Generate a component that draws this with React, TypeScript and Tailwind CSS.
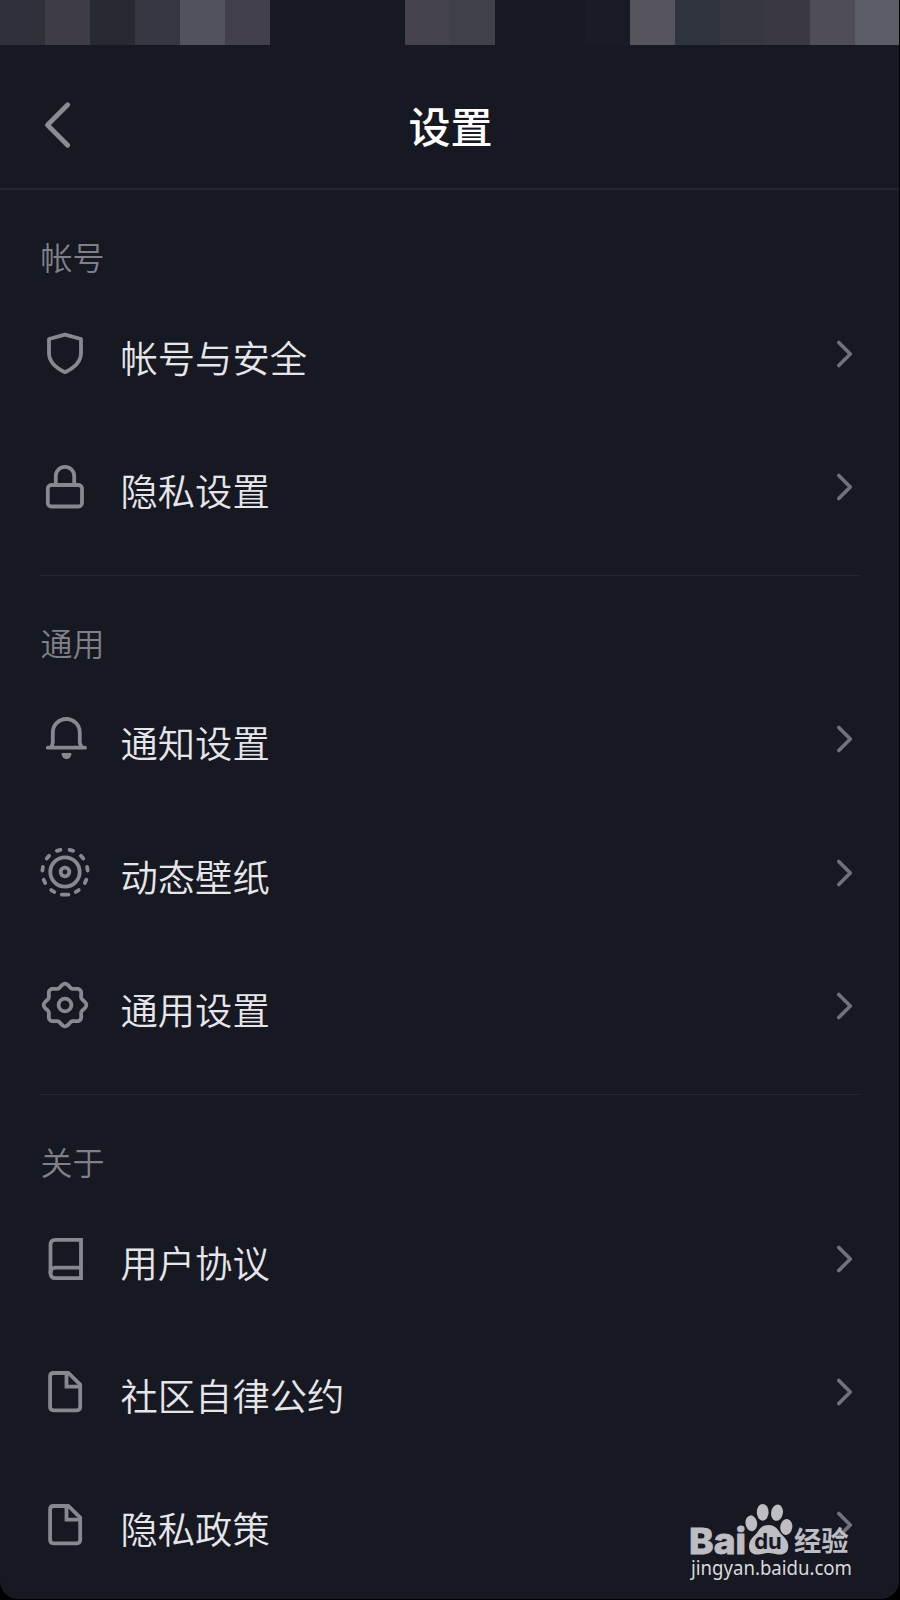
import type { ReactNode } from "react";

const statusBlocks = [
  "bg-[#2e3139]",
  "bg-[#3e3c45]",
  "bg-[#272a31]",
  "bg-[#34373f]",
  "bg-[#50535b]",
  "bg-[#413f49]",
  "bg-[#161822]",
  "bg-[#161822]",
  "bg-[#161822]",
  "bg-[#45444d]",
  "bg-[#3f4149]",
  "bg-[#161822]",
  "bg-[#161822]",
  "bg-[#191b26]",
  "bg-[#55545c]",
  "bg-[#30353d]",
  "bg-[#363840]",
  "bg-[#3a3841]",
  "bg-[#4f4e57]",
  "bg-[#5b5e66]",
];

function gearPath() {
  const points: string[] = [];
  for (let deg = 0; deg < 360; deg += 3) {
    const a = (deg * Math.PI) / 180;
    const r = 19.5 + 1.8 * Math.cos(8 * a);
    points.push(`${(25 + r * Math.cos(a)).toFixed(2)} ${(24 + r * Math.sin(a)).toFixed(2)}`);
  }
  return `M${points.join("L")}Z`;
}

const icons: Record<string, ReactNode> = {
  shield: <path d="M25 5.6L41 10V24C41 32.5 35 38.5 25 43.2C15 38.5 9 32.5 9 24V10Z" />,
  lock: (
    <>
      <rect x="7.8" y="23" width="34.2" height="21.5" rx="3.5" />
      <path d="M15.8 23V14a9.2 9.2 0 0 1 18.4 0V23" />
    </>
  ),
  bell: (
    <>
      <path d="M7.8 33.7H45M11.5 33.2L12.8 28.5V18.5a13.5 13.5 0 0 1 27 0V28.5L41.3 33.2" />
      <path
        d="M22.5 39H30.5Q31.8 39 31.4 40.5Q30.2 45 26.5 45Q22.8 45 21.6 40.5Q21.2 39 22.5 39Z"
        fill="currentColor"
        stroke="none"
      />
    </>
  ),
  wallpaper: (
    <>
      <circle cx="25" cy="24" r="14.7" />
      <circle cx="25" cy="24" r="4.3" />
      {Array.from({ length: 11 }, (_, i) => (
        <path
          key={i}
          d={i === 0 ? "M21.8 46.6H28.4" : "M23.2 46.6H26.8"}
          transform={`rotate(${(i * 360) / 11} 25 24)`}
        />
      ))}
    </>
  ),
  gear: (
    <>
      <path d={gearPath()} />
      <circle cx="25" cy="24" r="6.4" />
    </>
  ),
  book: (
    <>
      <path d="M41 5.8H15.5Q10.5 5.8 10.5 10.8V39Q10.5 44.2 15.5 44.2H41Z" strokeLinejoin="miter" />
      <path d="M41 33.7H15.5Q10.5 33.7 10.5 39" />
    </>
  ),
  file: (
    <>
      <path d="M14 6H28.5L40.2 17.6V39.8Q40.2 43.3 36.7 43.3H13.6Q10.1 43.3 10.1 39.8V9.5Q10.1 6 13.6 6Z" />
      <path d="M26.5 6.5V19.7H40" strokeLinejoin="miter" />
    </>
  ),
};

const sections = [
  {
    title: "帐号",
    items: [
      { icon: "shield", label: "帐号与安全" },
      { icon: "lock", label: "隐私设置" },
    ],
  },
  {
    title: "通用",
    items: [
      { icon: "bell", label: "通知设置" },
      { icon: "wallpaper", label: "动态壁纸" },
      { icon: "gear", label: "通用设置" },
    ],
  },
  {
    title: "关于",
    items: [
      { icon: "book", label: "用户协议" },
      { icon: "file", label: "社区自律公约" },
      { icon: "file", label: "隐私政策" },
    ],
  },
];

function SettingRow({ icon, label }: { icon: string; label: string }) {
  return (
    <div className="flex h-[133.3px] items-center pt-px">
      <svg
        viewBox="0 0 50 50"
        className="size-[50px] shrink-0 text-[#888990]"
        fill="none"
        stroke="currentColor"
        strokeWidth="3.8"
        strokeLinecap="round"
        strokeLinejoin="round"
      >
        {icons[icon]}
      </svg>
      <span className="ml-[30.5px] flex-1 pt-[6px] text-[37.3px] leading-[50px] font-[350] text-[#e6e6e9]">
        {label}
      </span>
      <svg
        viewBox="0 0 20 32"
        className="mr-1 h-8 w-5 shrink-0"
        fill="none"
        stroke="#70717a"
        strokeWidth="3.7"
        strokeLinecap="round"
        strokeLinejoin="round"
      >
        <path d="M3.8 4.5L15.3 16L3.8 27.5" />
      </svg>
    </div>
  );
}

function Watermark() {
  return (
    <svg
      viewBox="0 0 170 84"
      className="absolute right-[45px] bottom-[16px] h-[84px] w-[170px]"
      fill="#bdbdc2"
    >
      <text
        x="5"
        y="54.5"
        fontSize="36"
        fontWeight="800"
        textLength="57"
        lengthAdjust="spacingAndGlyphs"
        fontFamily="Inter, sans-serif"
        stroke="#bdbdc2"
        strokeWidth="0.8"
      >
        Bai
      </text>
      <ellipse cx="67.3" cy="24.3" rx="5.8" ry="8" transform="rotate(-8 67.3 24.3)" />
      <ellipse cx="78.7" cy="13.3" rx="5.9" ry="8.4" />
      <ellipse cx="93" cy="13.7" rx="5.9" ry="8.2" transform="rotate(10 93 13.7)" />
      <ellipse cx="102.3" cy="28" rx="6" ry="8" transform="rotate(8 102.3 28)" />
      <path d="M84.5 26C79 26 76 29 73.5 33C70 38 65 40 65 47.5C65 54 70 56 75 55.5C79 55 81 54 84.5 54C88 54 90 55 94 55.5C99 56 104.3 54 104.3 47.5C104.3 40 99 38 95.5 33C93 29 90 26 84.5 26Z" />
      <text
        x="70.2"
        y="50"
        fill="#161822"
        fontSize="22"
        fontWeight="700"
        textLength="27.6"
        lengthAdjust="spacingAndGlyphs"
        fontFamily="Inter, sans-serif"
      >
        du
      </text>
      <text x="110" y="52.2" fontSize="27.3" fontWeight="700">
        经验
      </text>
      <text
        x="7"
        y="76"
        fill="#dadadd"
        fontSize="19.5"
        textLength="161"
        lengthAdjust="spacingAndGlyphs"
        fontFamily="'Noto Sans', sans-serif"
      >
        jingyan.baidu.com
      </text>
    </svg>
  );
}

export default function App() {
  return (
    <div className="h-[1600px] w-[900px] overflow-hidden bg-black font-['Noto_Sans_CJK_SC',sans-serif]">
      <div className="relative h-[1599px] w-[899px] overflow-hidden rounded-b-[18px] bg-[#161822]">
        <div className="flex h-[45px]">
          {statusBlocks.map((color, i) => (
            <div key={i} className={`h-[45px] w-[45px] shrink-0 ${color}`} />
          ))}
        </div>

        <header className="grid h-[145px] grid-cols-[1fr_auto_1fr] items-center border-b-2 border-[#24262f] pb-[1px]">
          <svg
            viewBox="0 0 30 50"
            className="ml-[43px] h-[50px] w-[30px] translate-y-[9px]"
            fill="none"
            stroke="#8b8b92"
            strokeWidth="4.8"
            strokeLinecap="round"
            strokeLinejoin="round"
          >
            <path d="M24.7 4.8L4.5 25L24.7 45.2" />
          </svg>
          <h1 className="pt-[17px] pl-[2px] text-[42px] leading-[60px] font-medium text-white">设置</h1>
        </header>

        <main className="px-10">
          {sections.map((section) => (
            <section
              key={section.title}
              className="border-b border-[#262832] pb-[21.7px] last:border-b-0"
            >
              <h2 className="h-[96.5px] pt-[43px] pl-[0.5px] text-[32px] leading-[46px] font-[350] text-[#808188]">
                {section.title}
              </h2>
              {section.items.map((item) => (
                <SettingRow key={item.label} {...item} />
              ))}
            </section>
          ))}
        </main>

        <Watermark />
      </div>
    </div>
  );
}
